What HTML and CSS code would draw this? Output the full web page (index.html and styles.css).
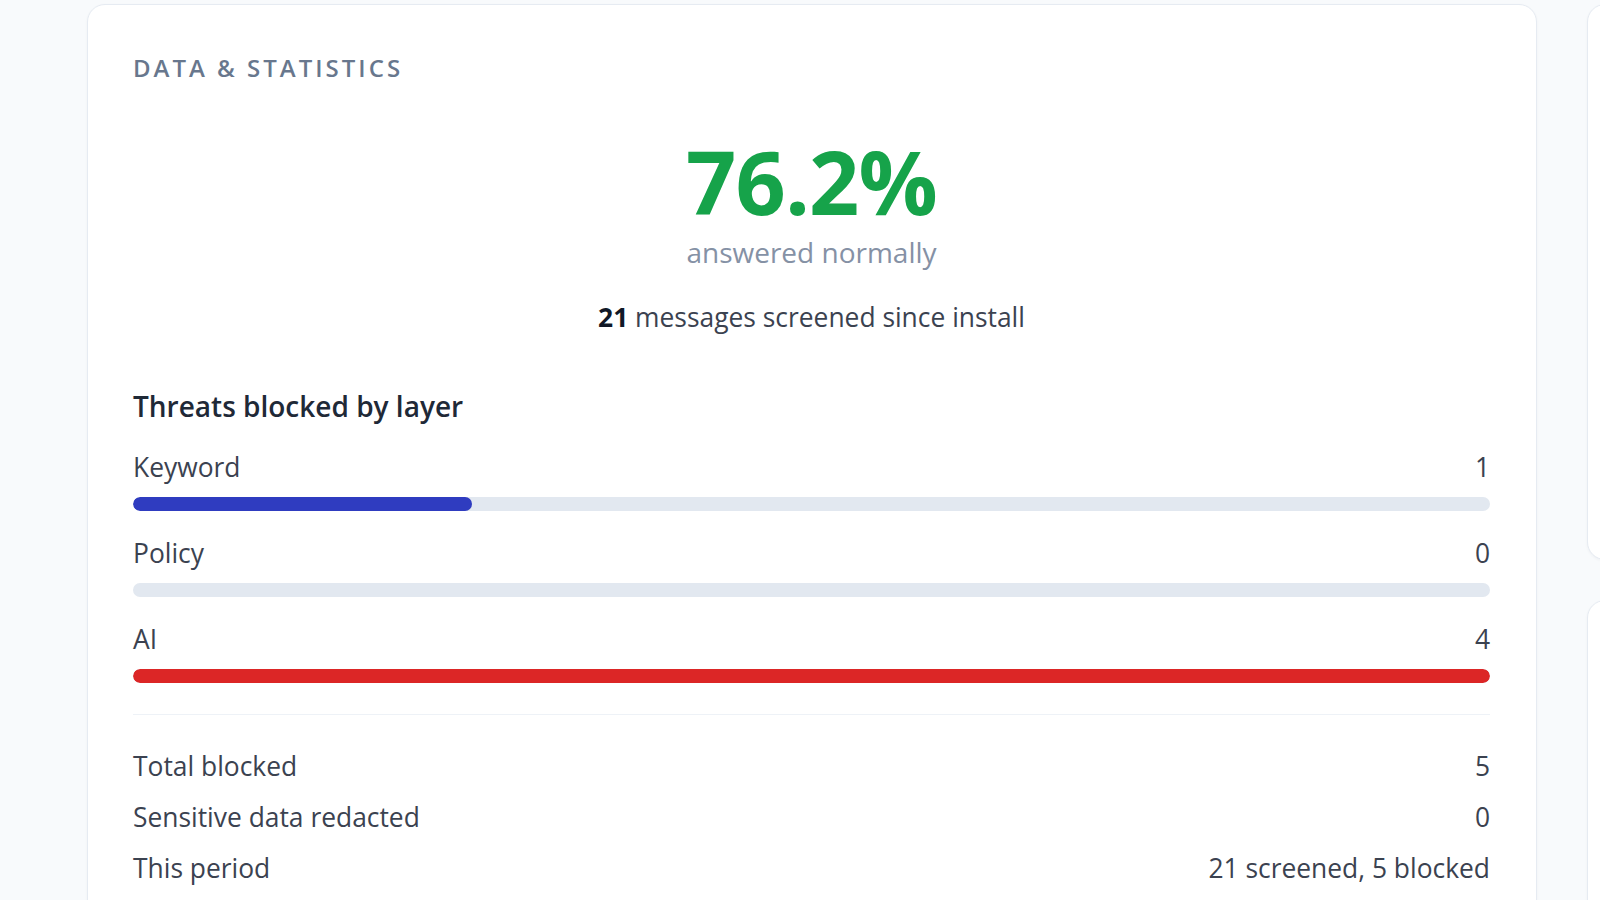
FILE: index.html
```html
<html>
	<head>
		<title>Data &amp; Statistics</title>
		<meta charset="UTF-8">
		<meta name="viewport" content="width=device-width, initial-scale=1">
		<link rel="stylesheet" href="styles.css">
	</head>
	<body>
		<div class="page">
			<div class="card stats">
				<div class="title">Data &amp; Statistics</div>

				<div class="hero">
					<div class="big">76.2%</div>
					<div class="sub">answered normally</div>
					<div class="since"><b>21</b> messages screened since install</div>
				</div>

				<div class="heading">Threats blocked by layer</div>
				<div class="layers">
					<div class="layer">
						<div class="row"><span>Keyword</span><span>1</span></div>
						<div class="track"><div class="fill blue" style="width: 25%"></div></div>
					</div>
					<div class="layer">
						<div class="row"><span>Policy</span><span>0</span></div>
						<div class="track"><div class="fill" style="width: 0%"></div></div>
					</div>
					<div class="layer">
						<div class="row"><span>AI</span><span>4</span></div>
						<div class="track"><div class="fill red" style="width: 100%"></div></div>
					</div>
				</div>

				<div class="summary">
					<div class="row"><span>Total blocked</span><span>5</span></div>
					<div class="row"><span>Sensitive data redacted</span><span>0</span></div>
					<div class="row"><span>This period</span><span>21 screened, 5 blocked</span></div>
				</div>
			</div>
			<div class="side">
				<div class="card side-top"></div>
				<div class="card side-bottom"></div>
			</div>
		</div>
	</body>
</html>
```

FILE: styles.css
```css
body {
	margin: 0;
	background: #f8fafc;
	font-family: "Open Sans", "Noto Sans", sans-serif;
	color: #3b4250;
	overflow: hidden;
}
.page {
	display: flex;
	gap: 50px;
	padding: 4px 0 0 87px;
	width: 2200px;
}
.card {
	background: #fff;
	border: 1px solid #e6ebf2;
	border-radius: 18px;
	box-shadow: 0 1px 3px rgba(15, 23, 42, 0.04);
	box-sizing: border-box;
}
.stats {
	width: 1450px;
	flex: none;
	padding: 48px 46px 45px 45px;
}
.title {
	font-size: 24px;
	line-height: 30px;
	font-weight: 600;
	letter-spacing: 0.125em;
	text-transform: uppercase;
	color: #68778d;
}
.hero {
	text-align: center;
	margin-top: 52px;
}
.big {
	font-size: 88px;
	line-height: 92px;
	font-weight: 700;
	color: #16a34a;
	letter-spacing: -0.01em;
}
.sub {
	margin-top: 7px;
	font-size: 28px;
	line-height: 36px;
	color: #8591a5;
}
.since {
	margin-top: 29px;
	font-size: 26.4px;
	line-height: 36px;
	color: #3b4250;
}
.since b {
	color: #111827;
	font-weight: 700;
}
.heading {
	margin-top: 53px;
	font-size: 28px;
	line-height: 36px;
	font-weight: 600;
	color: #1f2937;
}
.layers {
	margin-top: 26px;
	display: flex;
	flex-direction: column;
	gap: 25px;
}
.row {
	display: flex;
	justify-content: space-between;
	font-size: 26.4px;
	line-height: 34px;
}
.track {
	margin-top: 13px;
	height: 14px;
	border-radius: 7px;
	background: #e2e8f0;
	overflow: hidden;
}
.fill {
	height: 100%;
	border-radius: 7px;
}
.blue {
	background: #2f3cc0;
}
.red {
	background: #dc2626;
}
.summary {
	margin-top: 31px;
	border-top: 1px solid #eef2f7;
	padding-top: 34px;
	display: flex;
	flex-direction: column;
	gap: 17px;
}
.side {
	display: flex;
	flex-direction: column;
	gap: 40px;
	width: 420px;
	flex: none;
}
.side-top {
	height: 556px;
}
.side-bottom {
	height: 400px;
}
```
